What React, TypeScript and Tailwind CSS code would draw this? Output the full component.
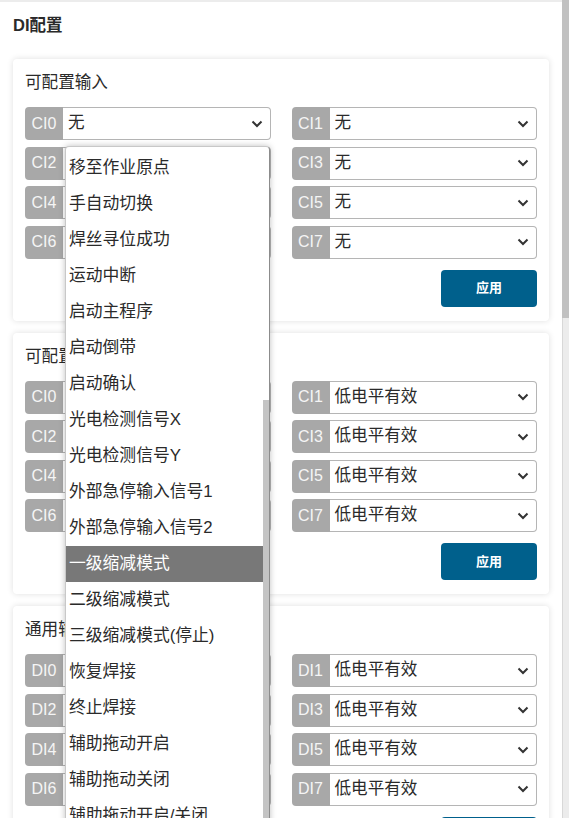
import React from 'react';

const FONT = "font-['Liberation_Sans','Noto_Sans_CJK_SC',sans-serif]";

const OPTIONS = [
  '移至作业原点',
  '手自动切换',
  '焊丝寻位成功',
  '运动中断',
  '启动主程序',
  '启动倒带',
  '启动确认',
  '光电检测信号X',
  '光电检测信号Y',
  '外部急停输入信号1',
  '外部急停输入信号2',
  '一级缩减模式',
  '二级缩减模式',
  '三级缩减模式(停止)',
  '恢复焊接',
  '终止焊接',
  '辅助拖动开启',
  '辅助拖动关闭',
  '辅助拖动开启/关闭',
];

const Chevron = () => (
  <svg width="12" height="8" viewBox="0 0 12 8" className="shrink-0">
    <polyline points="1.5,1.5 6,6 10.5,1.5" fill="none" stroke="#333" strokeWidth="2" />
  </svg>
);

const SelectRow = ({ label, value }: { label: string; value: string }) => (
  <div className="flex h-[33px]">
    <div className="w-[38px] shrink-0 rounded-l-[4px] bg-[#a8a8a8] text-[#f5f5f5] text-[16px] flex items-center justify-center">
      {label}
    </div>
    <div className="flex-1 flex items-center justify-between border border-l-0 border-[#b5b5b5] rounded-r-[4px] bg-white pl-[5px] pr-[7px] text-[16.6px] text-[#2a2a2a]">
      <span>{value}</span>
      <Chevron />
    </div>
  </div>
);

const Card = ({ title, prefix, value }: { title: string; prefix: string; value: string }) => (
  <div className="rounded-[4px] bg-white shadow-[0_0_6px_rgba(0,0,0,0.13)] px-[12px] pt-[12px] pb-[14px]">
    <div className="text-[16.6px] text-[#2a2a2a] leading-[24px]">{title}</div>
    <div className="mt-[12px] grid grid-cols-2 gap-x-[21px] gap-y-[6.5px]">
      {[0, 1, 2, 3, 4, 5, 6, 7].map((i) => (
        <SelectRow key={i} label={`${prefix}${i}`} value={value} />
      ))}
    </div>
    <div className="mt-[11px] flex justify-end">
      <button className="w-[96px] h-[37px] rounded-[4px] bg-[#00608c] text-white text-[13px] font-bold">应用</button>
    </div>
  </div>
);

export default function App() {
  return (
    <div className={`flex h-[818px] overflow-hidden bg-white ${FONT}`}>
      <div className="relative flex-1 border-t-2 border-[#ececec]">
        <div className="px-[13px]">
          <h1 className="pt-[12px] text-[16.5px] leading-[22px] font-bold text-[#2a2a2a]">DI配置</h1>
          <div className="mt-[23px] flex flex-col gap-[12px]">
            <Card title="可配置输入" prefix="CI" value="无" />
            <Card title="可配置输入有效电平" prefix="CI" value="低电平有效" />
            <Card title="通用输入有效电平" prefix="DI" value="低电平有效" />
          </div>
        </div>

        {/* open dropdown list */}
        <div className="absolute left-[65px] top-[144px] w-[205px] h-[700px] flex rounded-t-[4px] bg-white border border-[#c8c8c8] border-r-[#8c8c8c] shadow-[0_0_6px_rgba(0,0,0,0.25)]">
          <div className="flex-1 pt-[3px]">
            {OPTIONS.map((o) => (
              <div
                key={o}
                className={`h-[36px] pl-[3px] flex items-center text-[16.8px] whitespace-nowrap ${
                  o === '一级缩减模式' ? 'bg-[#787878] text-white' : 'text-[#2a2a2a]'
                }`}
              >
                {o}
              </div>
            ))}
          </div>
          <div className="w-[6px] flex flex-col">
            <div className="h-[253px]" />
            <div className="flex-1 bg-[#c4c4c4]" />
          </div>
        </div>
      </div>
      {/* page scrollbar */}
      <div className="w-[7px] flex flex-col">
        <div className="h-[318px] bg-[#c1c1c1]" />
        <div className="flex-1 bg-[#ececec] border-l border-[#d8d8d8]" />
      </div>
    </div>
  );
}
